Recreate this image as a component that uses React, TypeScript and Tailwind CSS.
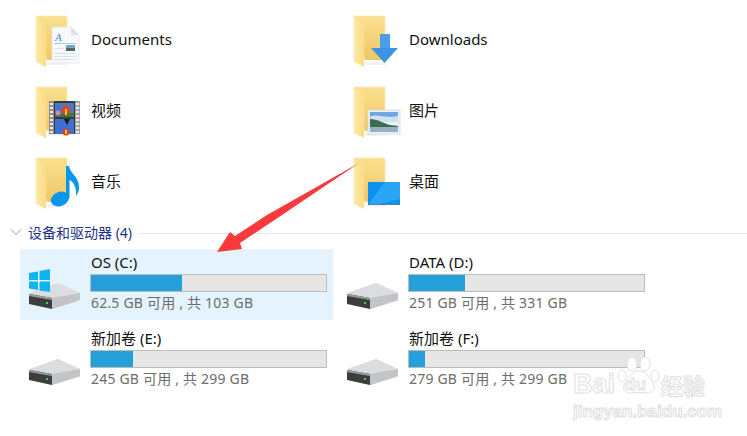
import React from 'react';

const font = "[font-family:'Noto_Sans','Noto_Sans_CJK_SC',sans-serif]";

const FolderBase = () => (
  <>
    <defs>
      <linearGradient id="back" x1="0" y1="0" x2="0" y2="1">
        <stop offset="0" stopColor="#fbe08e" />
        <stop offset="1" stopColor="#eec766" />
      </linearGradient>
      <linearGradient id="flap" x1="0" y1="0" x2="1" y2="0">
        <stop offset="0" stopColor="#fdeaa8" />
        <stop offset="1" stopColor="#fbd981" />
      </linearGradient>
    </defs>
    <polygon points="12,47 33,47 33,50 12,50" fill="#f3f3f3" />
    <polygon points="1,1 32,1 32,45 12,45" fill="url(#back)" />
    <polyline points="1,1 32,1 32,45" fill="none" stroke="#fbeab8" strokeWidth="1" />
    <polygon points="1,2 12,10 11,52 1,47" fill="url(#flap)" />
    <polyline points="1,47 1,2" fill="none" stroke="#fcecb9" strokeWidth="1" />
  </>
);

const DocOverlay = () => (
  <g>
    <polygon points="17,12 36,12 44,20 44,48 17,48" fill="#f7f9fb" stroke="#dfe3e6" strokeWidth="0.7" />
    <polygon points="36,12 44,20 36,20" fill="#dde3e6" />
    <text x="20" y="26" fontSize="11" fontStyle="italic" fontFamily="Liberation Serif" fill="#3d8fd4">A</text>
    <rect x="19" y="28" width="22" height="1" fill="#a9cbe6" />
    <rect x="31" y="30" width="9" height="6" fill="#7aa7c0" />
    <rect x="31" y="33" width="9" height="3" fill="#4d6b5f" />
    <rect x="19" y="33" width="10" height="1" fill="#dbe3ea" />
    <rect x="19" y="38" width="22" height="1" fill="#dbe3ea" />
    <rect x="19" y="41" width="22" height="1" fill="#dbe3ea" />
    <rect x="19" y="44" width="22" height="1" fill="#dbe3ea" />
  </g>
);

const VideoOverlay = () => (
  <g>
    <rect x="14" y="15" width="31" height="33" fill="#3a3a3a" />
    <rect x="14" y="15" width="5" height="33" fill="#8d8d8d" />
    <rect x="40" y="15" width="5" height="33" fill="#a5a5a5" />
    {[17, 21, 25, 29, 33, 37, 41, 45].map((y) => (
      <g key={y}>
        <rect x="15" y={y} width="3" height="2" fill="#e9e9e9" />
        <rect x="41" y={y} width="3" height="2" fill="#e9e9e9" />
      </g>
    ))}
    <rect x="20" y="17" width="19" height="14" fill="#4a78c9" />
    <rect x="20" y="27" width="19" height="4" fill="#3f7d3a" />
    <rect x="20" y="33" width="19" height="15" fill="#3f6fd0" />
    <circle cx="31" cy="24" r="4.5" fill="#d9472b" />
    <rect x="30" y="23" width="2" height="6" fill="#f1c232" />
    <circle cx="23" cy="27" r="2.5" fill="#d584c0" />
    <path d="M29 33 L35 33 L32 39 Z" fill="#1a1a1a" />
    <circle cx="31" cy="46" r="3.5" fill="#d9472b" />
    <rect x="30" y="44" width="2" height="4" fill="#f1c232" />
  </g>
);

const MusicOverlay = () => (
  <g>
    <ellipse cx="25" cy="42" rx="9.5" ry="7" transform="rotate(-22 25 42)" fill="#0a96ec" />
    <path d="M31 41 L31 9 L34 9 C35 17 44 19 44 30 C44 34 43 36 41 39 C42 32 39 25 34.5 23 L34.5 41 Z" fill="#0a96ec" />
  </g>
);

const DownloadOverlay = () => (
  <g>
    <rect x="27" y="19" width="10" height="15" fill="#4a9fe8" />
    <polygon points="18,33 45,33 31.5,48" fill="#3d94e0" />
  </g>
);

const PictureOverlay = () => (
  <g>
    <rect x="15" y="24" width="32" height="24" fill="#eef1f3" stroke="#d5dadd" strokeWidth="0.8" />
    <rect x="17" y="26" width="28" height="10" fill="#6fa6e8" />
    <path d="M17 31 C24 27 30 33 45 30 L45 36 L17 36 Z" fill="#cfe2f2" />
    <path d="M17 33 C24 33 30 37 37 39 L45 40 L45 41 L17 41 Z" fill="#3f6a50" />
    <rect x="17" y="41" width="28" height="5" fill="#93b2c2" />
  </g>
);

const DesktopOverlay = () => (
  <g>
    <rect x="15" y="25" width="32" height="23" fill="#0f90ee" />
    <polygon points="32,25 47,25 47,42 22,48 15,48" fill="#2aa6f7" />
    <rect x="15" y="47" width="32" height="1" fill="#4f7fa6" />
  </g>
);

const overlays: Record<string, React.ReactNode> = {
  doc: <DocOverlay />,
  video: <VideoOverlay />,
  music: <MusicOverlay />,
  download: <DownloadOverlay />,
  picture: <PictureOverlay />,
  desktop: <DesktopOverlay />,
};

const folders = [
  { name: 'Documents', icon: 'doc' },
  { name: 'Downloads', icon: 'download' },
  { name: '视频', icon: 'video' },
  { name: '图片', icon: 'picture' },
  { name: '音乐', icon: 'music' },
  { name: '桌面', icon: 'desktop' },
];

const drives = [
  { name: 'OS (C:)', used: 92, sub: '62.5 GB 可用 , 共 103 GB', system: true },
  { name: 'DATA (D:)', used: 57, sub: '251 GB 可用 , 共 331 GB' },
  { name: '新加卷 (E:)', used: 43, sub: '245 GB 可用 , 共 299 GB' },
  { name: '新加卷 (F:)', used: 17, sub: '279 GB 可用 , 共 299 GB' },
];

const DriveIcon = ({ system }: { system?: boolean }) => (
  <svg width="54" height="44" viewBox="0 0 54 44" className="shrink-0">
    <defs>
      <linearGradient id="hddTop" x1="0" y1="0" x2="1" y2="0">
        <stop offset="0" stopColor="#c9cacd" />
        <stop offset="1" stopColor="#e9e9ec" />
      </linearGradient>
    </defs>
    <polygon points="1,26 30,15 52,25 52,33 24,41 1,35" fill="url(#hddTop)" />
    <polygon points="1,25 30,15 52,25 24,30" fill="#dcdde0" />
    <polygon points="1,26 24,30 24,41 1,36" fill="#3c3e3d" />
    <polygon points="1,26 24,30 24,32 1,28" fill="#9a9c9c" />
    <polygon points="24,30 52,25 52,32 24,41" fill="#c3c4c6" />
    <rect x="18" y="34" width="2" height="2" fill="#3fd14a" />
    {system && (
      <g fill="#0fb5ee">
        <polygon points="1,5 10,3.5 10,12 1,12" />
        <polygon points="11.5,3 22,1 22,12 11.5,12" />
        <polygon points="1,13.5 10,13.5 10,22 1,20.5" />
        <polygon points="11.5,13.5 22,13.5 22,24 11.5,22.5" />
      </g>
    )}
  </svg>
);

export default function App() {
  return (
    <div className={`relative w-[747px] h-[436px] overflow-hidden bg-white pt-[3px] text-[15px] text-[#111] ${font}`}>
      {/* Folders */}
      <div className="grid grid-cols-[318px_318px] pl-5">
        {folders.map((f) => (
          <div key={f.name} className="flex h-[71px] items-center pl-[14px]">
            <svg width="48" height="54" viewBox="0 0 48 54" className="mt-[7px] shrink-0 ml-px">
              <FolderBase />
              {overlays[f.icon]}
            </svg>
            <span className="ml-2 leading-5">{f.name}</span>
          </div>
        ))}
      </div>

      {/* Section header */}
      <div className="mt-1 mb-[5px] flex h-6 items-center">
        <svg width="12" height="8" viewBox="0 0 12 8" className="ml-[10px] shrink-0">
          <path d="M1 1.5 L6 6.5 L11 1.5" fill="none" stroke="#9a9a9a" strokeWidth="1" />
        </svg>
        <span className="ml-[6px] text-[14px] text-[#1e3287]">设备和驱动器 (4)</span>
        <div className="ml-[7px] mt-[3px] h-px flex-1 bg-[#e5e5e5]" />
      </div>

      {/* Drives */}
      <div className="grid grid-cols-[318px_318px] gap-y-[5px] pl-5">
        {drives.map((d) => (
          <div key={d.name} className={`flex h-[71px] w-[313px] pl-2 ${d.system ? 'bg-[#e5f3ff]' : ''}`}>
            <div className="mt-[19px]">
              <DriveIcon system={d.system} />
            </div>
            <div className="ml-2 pt-[3px]">
              <div className="h-5 leading-5 pl-px">{d.name}</div>
              <div className="mt-[2px] h-[18px] w-[237px] border border-[#bcbcbc] bg-[#e6e6e6]">
                <div className="h-full bg-[#26a0da]" style={{ width: d.used - 1 }} />
              </div>
              <div className="h-[22px] pl-px leading-[22px] text-[14px] text-[#6d6d6d] tracking-[0.2px]">{d.sub}</div>
            </div>
          </div>
        ))}
      </div>

      {/* Red arrow */}
      <svg width="747" height="436" className="pointer-events-none absolute left-0 top-0">
        <polygon
          points="359,163 282,215 240,243 242,249 217,252 230,232 235,236 267,215"
          fill="#f93a3a"
        />
      </svg>

      {/* Watermark */}
      <div className="pointer-events-none absolute left-[573px] top-[366px] h-[56px] w-[140px] text-white [-webkit-text-stroke:1px_#e0e0e0]">
        <span className="absolute left-0 top-[2px] text-[27px] font-bold leading-8 [font-family:'Liberation_Sans',sans-serif]">Bai</span>
        <svg width="44" height="40" viewBox="0 0 44 40" className="absolute left-[44px] top-[-10px]">
          <g fill="#fff" stroke="#e0e0e0" strokeWidth="1">
            <ellipse cx="5" cy="20" rx="4" ry="6" />
            <ellipse cx="15" cy="8" rx="5" ry="7" />
            <ellipse cx="28" cy="8" rx="5" ry="7" />
            <ellipse cx="38" cy="20" rx="4" ry="6" />
            <path d="M22 15 C30 15 32 23 36 27 C40 33 34 38 28 37 C24 36 20 36 16 37 C9 38 4 33 8 27 C12 23 14 15 22 15 Z" />
          </g>
        </svg>
        <span className="absolute left-[52px] top-[7px] text-[17px] font-bold leading-6 [font-family:'Liberation_Sans',sans-serif]">du</span>
        <span className="absolute left-[88px] top-[4px] text-[22px] font-bold leading-7 [font-family:'Noto_Sans_CJK_SC',sans-serif]">经验</span>
        <span className="absolute left-0 top-[36px] text-[17px] font-bold leading-5 [font-family:'Liberation_Sans',sans-serif]">jingyan.baidu.com</span>
      </div>
    </div>
  );
}
